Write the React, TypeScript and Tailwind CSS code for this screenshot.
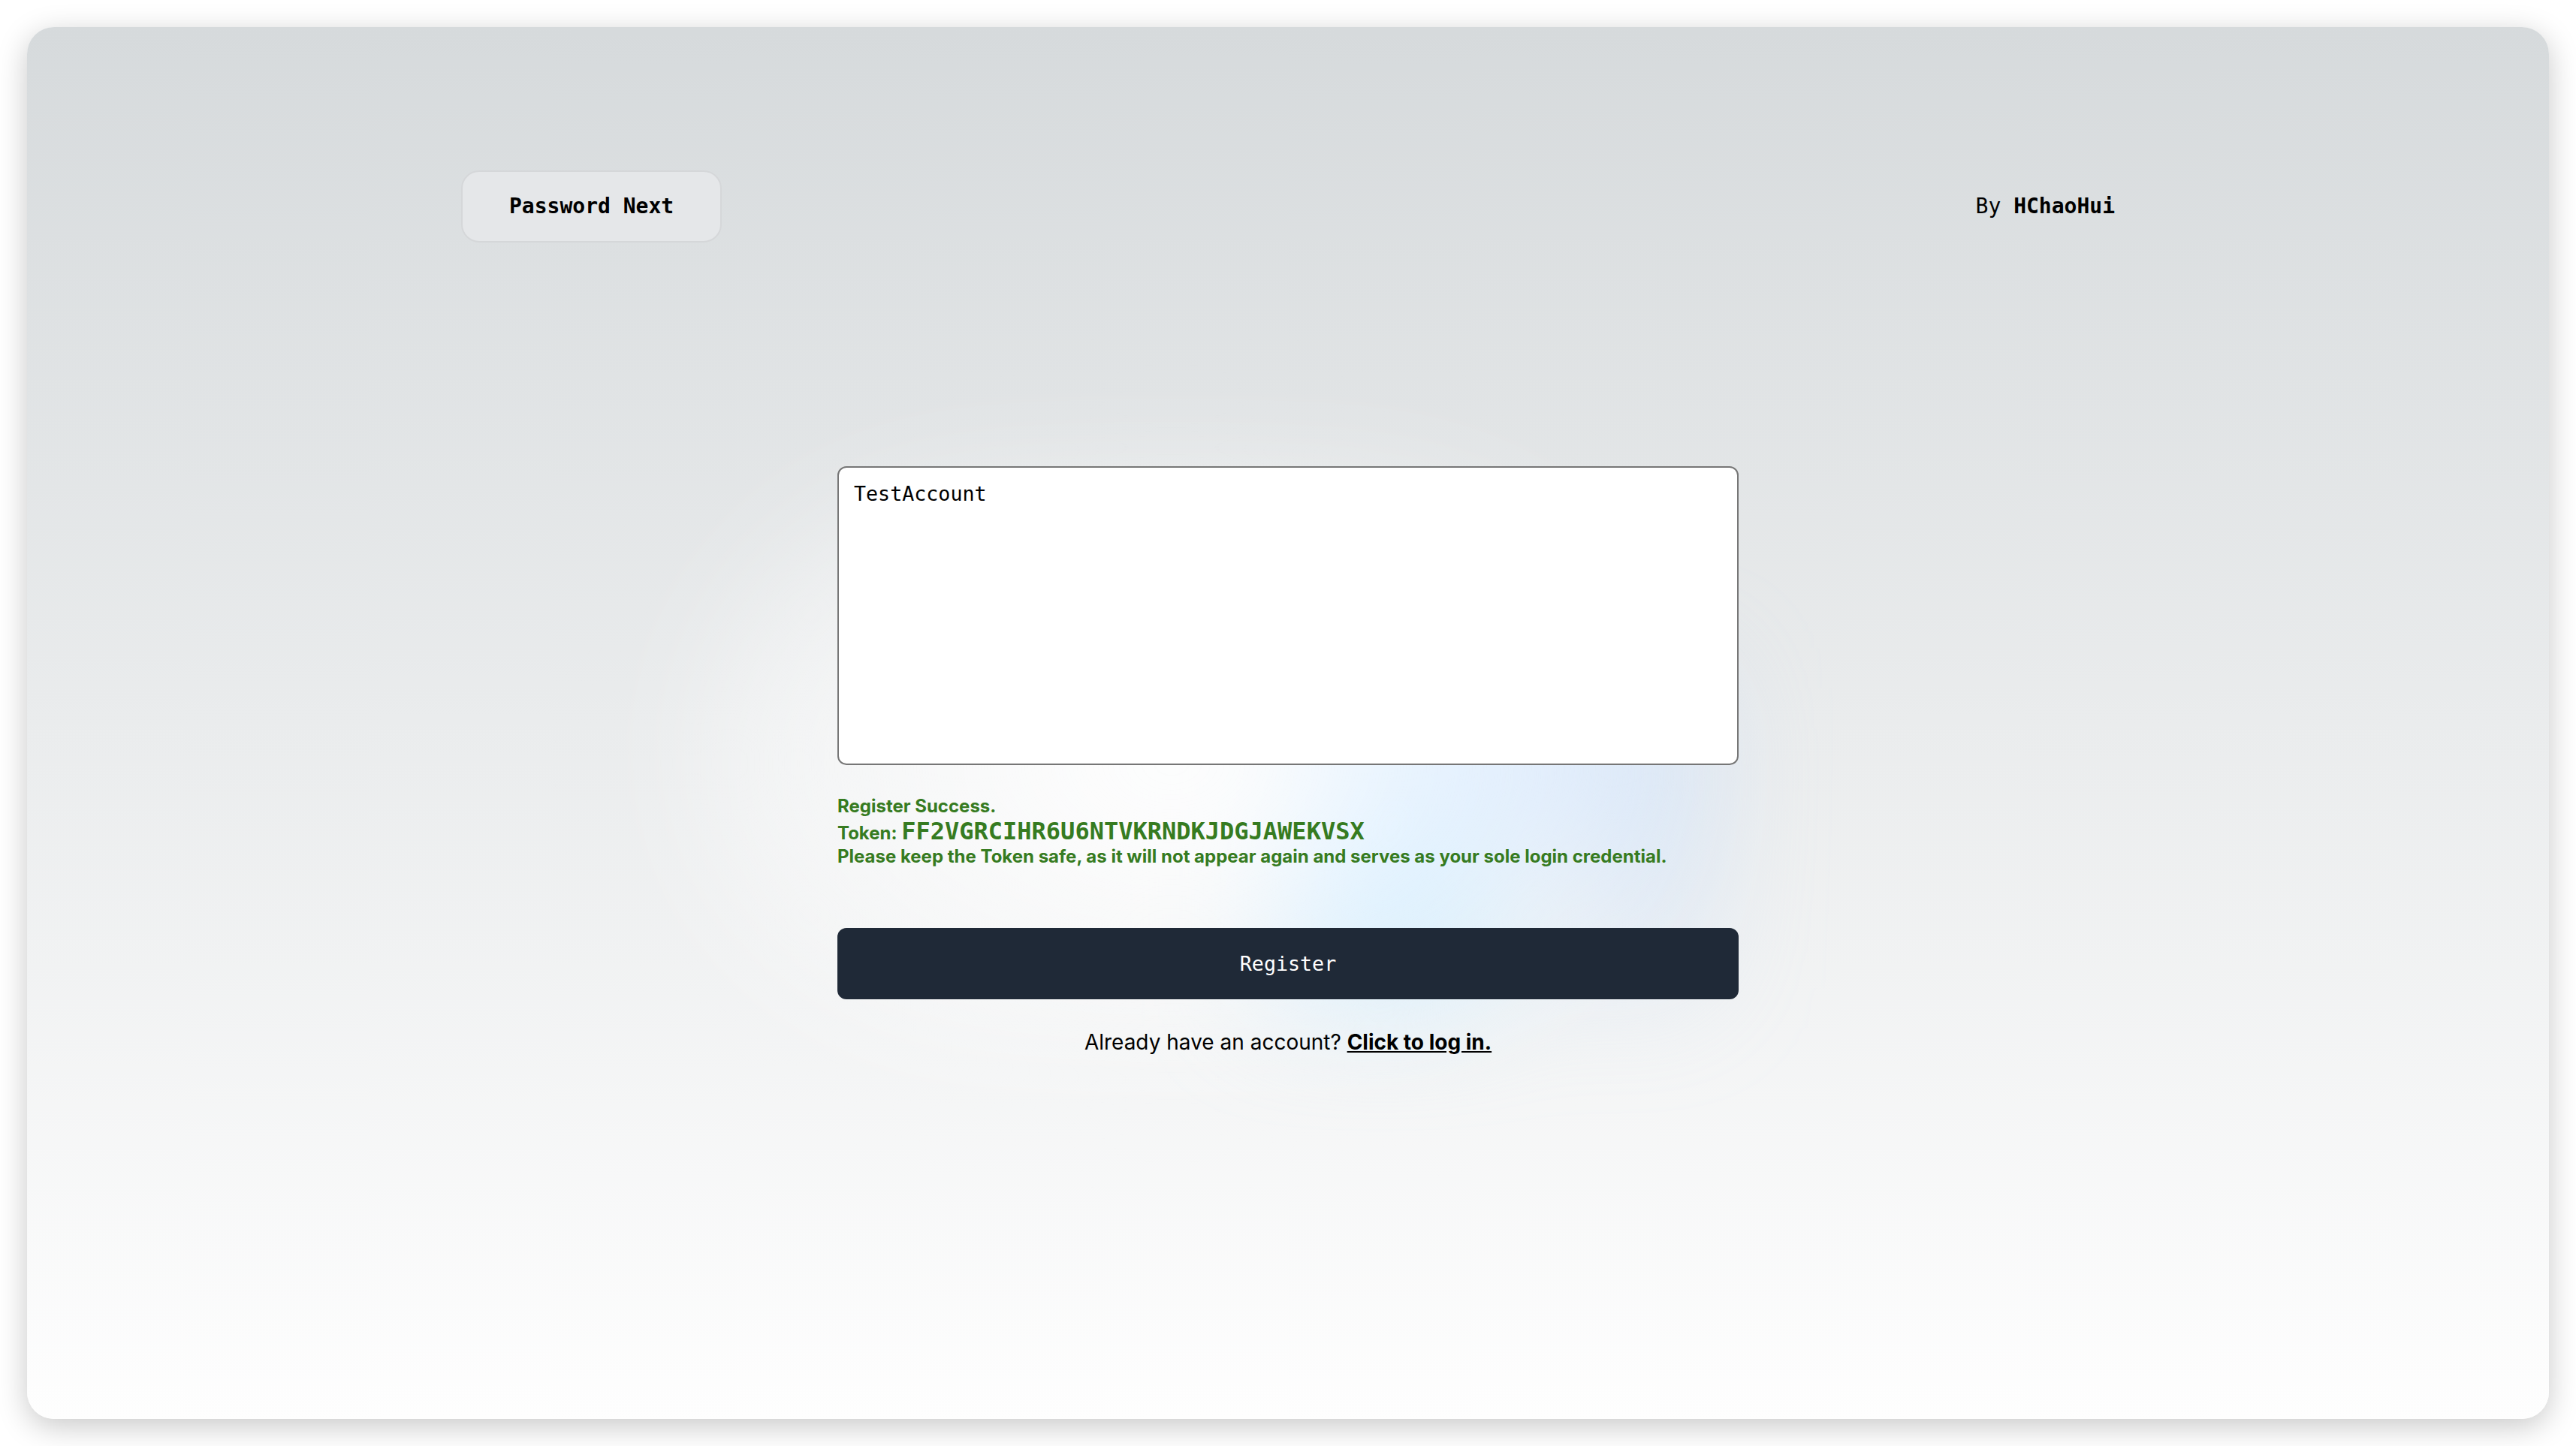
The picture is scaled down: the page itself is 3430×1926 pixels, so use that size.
/* Password Next — register page after success (token shown once) */
import { useState } from "react";

const mono = "font-['DejaVu_Sans_Mono',_'Liberation_Mono',_monospace]";
const sans = "font-['Inter',_'Noto_Sans',_sans-serif]";

const TOKEN = "FF2VGRCIHR6U6NTVKRNDKJDGJAWEKVSX";

export default function App() {
  const [account, setAccount] = useState("TestAccount");

  return (
    <div className="h-screen w-full bg-white p-[36px]">
      <main className="relative h-full w-full overflow-hidden rounded-[36px] bg-[linear-gradient(to_bottom,#d6dadc,#fefefe)] shadow-[0_10px_40px_rgba(0,0,0,0.22)]">
        {/* background glows (blue conic under a white radial haze) */}
        <div className="pointer-events-none absolute left-[1660px] top-[880px] h-[400px] w-[560px] bg-[conic-gradient(from_180deg_at_50%_50%,#bae6fd,#bfdbfe,transparent)] blur-[80px]" />
        <div className="pointer-events-none absolute left-[874px] top-[591px] h-[780px] w-[1300px] rounded-full bg-[radial-gradient(white,transparent)] blur-[80px]" />

        <div className="relative z-10 flex flex-col items-center pt-[191px]">
          {/* header */}
          <header className={`flex w-[2202px] items-center justify-between text-[28px] text-black ${mono}`}>
            <div className="flex h-[96px] items-center rounded-[24px] border-2 border-[#d5d7d9] bg-[#e5e7e9] px-[62px] font-bold">
              Password Next
            </div>
            <p>
              By <span className="font-bold">HChaoHui</span>
            </p>
          </header>

          {/* form */}
          <div className="mt-[298px] flex w-[1200px] flex-col">
            <textarea
              value={account}
              onChange={(e) => setAccount(e.target.value)}
              className={`h-[398px] w-full resize-none rounded-[12px] border-2 border-[#767676] bg-white p-[20px] text-[26.67px] leading-[30px] text-black outline-none ${mono}`}
            />

            <div className={`mt-[43px] font-bold text-[#367b21] ${sans}`}>
              <p className="h-[29px] text-[24px] leading-none">Register Success.</p>
              <p className="flex items-baseline text-[24px] leading-none">
                Token:&nbsp;
                <span className={`text-[32px] font-bold leading-none ${mono}`}>{TOKEN}</span>
              </p>
              <p className="mt-[6px] text-[24px] leading-none">
                Please keep the Token safe, as it will not appear again and serves as your sole login credential.
              </p>
            </div>

            <button className={`mt-[83px] flex h-[95px] w-full items-center justify-center rounded-[12px] bg-[#1f2937] text-[26.67px] text-white ${mono}`}>
              Register
            </button>

            <p className={`mt-[37px] text-center text-[28px] leading-[40px] text-black ${sans}`}>
              Already have an account?{" "}
              <a href="#" className="font-bold underline">
                Click to log in.
              </a>
            </p>
          </div>
        </div>
      </main>
    </div>
  );
}
